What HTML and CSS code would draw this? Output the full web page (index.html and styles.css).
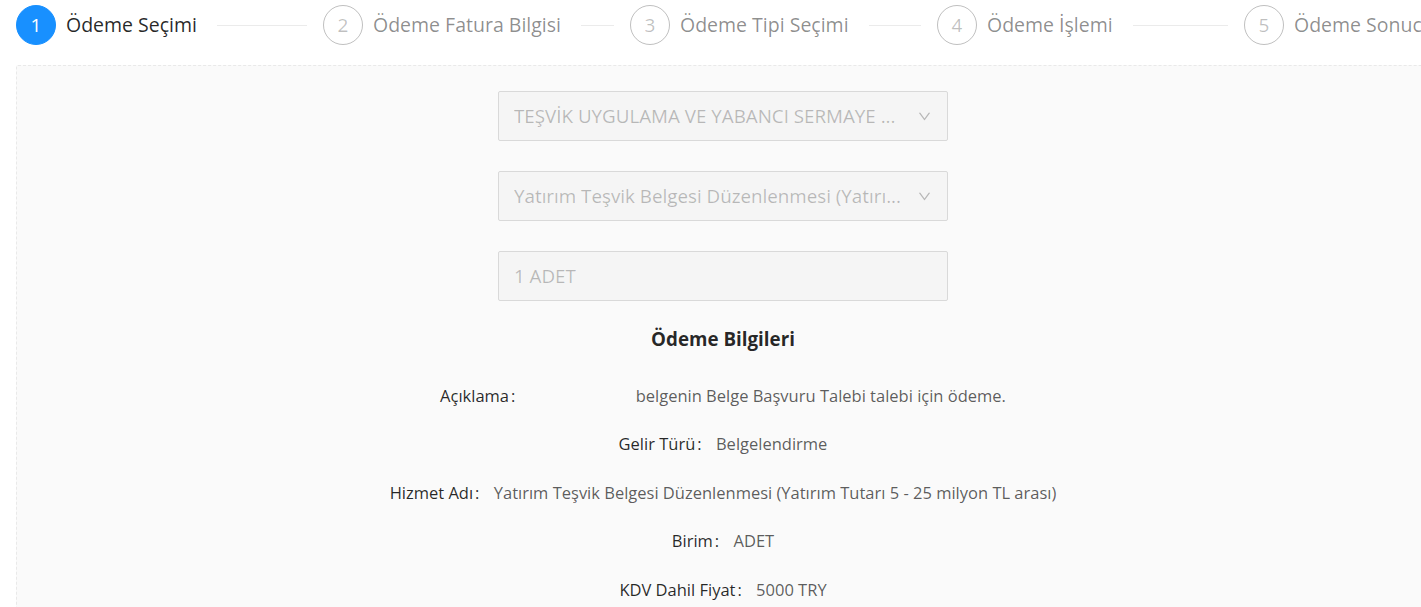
FILE: index.html
```html
<!DOCTYPE html>
<html lang="tr">
  <head>
    <meta charset="UTF-8" />
    <meta name="viewport" content="width=device-width, initial-scale=1.0" />
    <title>Ödeme Seçimi</title>
    <link rel="stylesheet" href="styles.css">
  </head>
  <body>
    <div class="page">
      <div class="steps">
        <div class="step step-active">
          <span class="step-icon">1</span>
          <span class="step-title">Ödeme Seçimi</span>
        </div>
        <div class="step">
          <span class="step-icon">2</span>
          <span class="step-title">Ödeme Fatura Bilgisi</span>
        </div>
        <div class="step">
          <span class="step-icon">3</span>
          <span class="step-title">Ödeme Tipi Seçimi</span>
        </div>
        <div class="step">
          <span class="step-icon">4</span>
          <span class="step-title">Ödeme İşlemi</span>
        </div>
        <div class="step step-last">
          <span class="step-icon">5</span>
          <span class="step-title">Ödeme Sonucu</span>
        </div>
      </div>

      <div class="steps-content">
        <div class="field select">
          <span class="select-text">TEŞVİK UYGULAMA VE YABANCI SERMAYE ...</span>
          <svg class="select-arrow" viewBox="0 0 1024 1024" width="15" height="15">
            <path d="M884 256h-75c-5.1 0-9.9 2.5-12.9 6.6L512 654.2 227.9 262.6c-3-4.1-7.8-6.6-12.9-6.6h-75c-6.5 0-10.3 7.4-6.5 12.7l352.6 486.1c12.8 17.6 39 17.6 51.7 0l352.6-486.1c3.9-5.3.1-12.7-6.4-12.7z" fill="currentColor"/>
          </svg>
        </div>
        <div class="field select">
          <span class="select-text">Yatırım Teşvik Belgesi Düzenlenmesi (Yatırı...</span>
          <svg class="select-arrow" viewBox="0 0 1024 1024" width="15" height="15">
            <path d="M884 256h-75c-5.1 0-9.9 2.5-12.9 6.6L512 654.2 227.9 262.6c-3-4.1-7.8-6.6-12.9-6.6h-75c-6.5 0-10.3 7.4-6.5 12.7l352.6 486.1c12.8 17.6 39 17.6 51.7 0l352.6-486.1c3.9-5.3.1-12.7-6.4-12.7z" fill="currentColor"/>
          </svg>
        </div>
        <div class="field input">1 ADET</div>

        <div class="info">
          <div class="info-title">Ödeme Bilgileri</div>
          <div class="info-row">
            <span class="info-label">Açıklama</span>
            <span class="info-value"><span class="blank"></span>belgenin Belge Başvuru Talebi talebi için ödeme.</span>
          </div>
          <div class="info-row">
            <span class="info-label">Gelir Türü</span>
            <span class="info-value">Belgelendirme</span>
          </div>
          <div class="info-row">
            <span class="info-label">Hizmet Adı</span>
            <span class="info-value">Yatırım Teşvik Belgesi Düzenlenmesi (Yatırım Tutarı 5 - 25 milyon TL arası)</span>
          </div>
          <div class="info-row">
            <span class="info-label">Birim</span>
            <span class="info-value">ADET</span>
          </div>
          <div class="info-row">
            <span class="info-label">KDV Dahil Fiyat</span>
            <span class="info-value">5000 TRY</span>
          </div>
        </div>
      </div>
    </div>
  </body>
</html>
```

FILE: styles.css
```css
body {
  margin: 0;
  font-family: "Open Sans", "Noto Sans", sans-serif;
  color: rgba(0, 0, 0, 0.85);
  background-color: #fff;
  overflow: hidden;
}
.page {
  width: 1414px;
  padding: 5px 0 0 16px;
}
.steps {
  display: flex;
}
.step {
  flex: 1;
  display: flex;
  align-items: center;
  padding-left: 16px;
  overflow: hidden;
  white-space: nowrap;
}
.step:first-child {
  padding-left: 0;
}
.step-last {
  flex: 0 0 186px;
}
.step-icon {
  flex: none;
  width: 38px;
  height: 38px;
  line-height: 38px;
  border: 1px solid rgba(0, 0, 0, 0.25);
  border-radius: 50%;
  text-align: center;
  font-size: 19px;
  color: rgba(0, 0, 0, 0.25);
  margin-right: 10px;
}
.step-title {
  position: relative;
  font-size: 19.5px;
  line-height: 40px;
  padding-right: 20px;
  color: rgba(0, 0, 0, 0.45);
}
.step-title::after {
  content: "";
  position: absolute;
  top: 20px;
  left: 100%;
  width: 9999px;
  height: 1px;
  background-color: #ebebeb;
}
.step-last .step-title::after {
  display: none;
}
.step-active .step-icon {
  background-color: #1890ff;
  border-color: #1890ff;
  color: #fff;
}
.step-active .step-title {
  color: rgba(0, 0, 0, 0.85);
}
.steps-content {
  margin-top: 20px;
  min-height: 600px;
  padding-top: 25px;
  border: 1px dashed #e9e9e9;
  border-radius: 2px;
  background-color: #fafafa;
  display: flex;
  flex-direction: column;
  align-items: center;
}
.field {
  box-sizing: border-box;
  width: 450px;
  height: 50px;
  margin-bottom: 30px;
  padding: 0 15px;
  display: flex;
  align-items: center;
  background-color: #f5f5f5;
  border: 1px solid #d9d9d9;
  border-radius: 2px;
  font-size: 18.8px;
  color: rgba(0, 0, 0, 0.25);
}
.select-text {
  flex: 1;
  overflow: hidden;
  white-space: nowrap;
  text-overflow: ellipsis;
}
.select-arrow {
  flex: none;
  margin-left: 12px;
  color: rgba(0, 0, 0, 0.25);
}
.input {
  margin-bottom: 0;
}
.info {
  display: flex;
  flex-direction: column;
  align-items: center;
  gap: 20.5px;
  font-size: 16.5px;
  line-height: 28px;
}
.info-title {
  margin-top: 24px;
  margin-bottom: 8px;
  font-size: 18.8px;
  font-weight: bold;
  color: rgba(0, 0, 0, 0.85);
}
.info-row {
  white-space: nowrap;
}
.info-label {
  color: rgba(0, 0, 0, 0.85);
}
.info-label::after {
  content: ":";
  margin: 0 10px 0 2px;
}
.info-value {
  color: rgba(0, 0, 0, 0.65);
}
.blank {
  display: inline-block;
  width: 106px;
}
```
